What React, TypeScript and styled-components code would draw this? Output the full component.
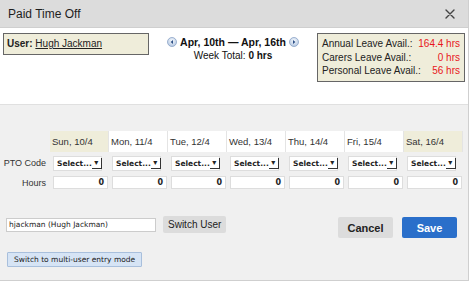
import { createGlobalStyle, styled } from 'styled-components';

const GlobalStyle = createGlobalStyle`
  html, body {
    margin: 0;
    padding: 0;
    background: #fff;
  }
  body {
    font-family: 'Liberation Sans', Arial, sans-serif;
    color: #222;
  }
`;

const days = [
  { label: 'Sun, 10/4', weekend: true },
  { label: 'Mon, 11/4', weekend: false },
  { label: 'Tue, 12/4', weekend: false },
  { label: 'Wed, 13/4', weekend: false },
  { label: 'Thu, 14/4', weekend: false },
  { label: 'Fri, 15/4', weekend: false },
  { label: 'Sat, 16/4', weekend: true },
];

const leave = [
  { name: 'Annual Leave Avail.:', value: '164.4 hrs' },
  { name: 'Carers Leave Avail.:', value: '0 hrs' },
  { name: 'Personal Leave Avail.:', value: '56 hrs' },
];

const Arrow = ({ dir }: { dir: 'left' | 'right' }) => (
  <svg width='10' height='10' viewBox='0 0 10 10'>
    <defs>
      <radialGradient id={`g-${dir}`} cx='50%' cy='35%' r='60%'>
        <stop offset='0' stopColor='#f4f8fd' />
        <stop offset='1' stopColor='#b9cbe3' />
      </radialGradient>
    </defs>
    <circle cx='5' cy='5' r='4.5' fill={`url(#g-${dir})`} stroke='#8aa3c6' strokeWidth='0.8' />
    {dir === 'left' ? (
      <path d='M6 3 L3.6 5 L6 7 Z' fill='#2c4f86' />
    ) : (
      <path d='M4 3 L6.4 5 L4 7 Z' fill='#2c4f86' />
    )}
  </svg>
);

const CloseIcon = () => (
  <svg width='10' height='10' viewBox='0 0 10 10'>
    <path d='M1 1 L9 9 M9 1 L1 9' stroke='#444' strokeWidth='1.4' strokeLinecap='round' />
  </svg>
);

const App = () => {
  return (
    <>
      <GlobalStyle />
      <Dialog>
        <Header>
          <Title>Paid Time Off</Title>
          <CloseIcon />
        </Header>
        <TopSection>
          <UserBox>
            <b>User:</b> <UserLink>Hugh Jackman</UserLink>
          </UserBox>
          <WeekNav>
            <WeekRange>
              <Arrow dir='left' />
              <span>Apr, 10th — Apr, 16th</span>
              <Arrow dir='right' />
            </WeekRange>
            <WeekTotal>
              Week Total: <b>0 hrs</b>
            </WeekTotal>
          </WeekNav>
          <LeaveBox>
            {leave.map((l) => (
              <LeaveRow key={l.name}>
                <span>{l.name}</span>
                <LeaveValue>{l.value}</LeaveValue>
              </LeaveRow>
            ))}
          </LeaveBox>
        </TopSection>
        <Body>
          <Grid>
            <span />
            {days.map((d) => (
              <DayHead key={d.label} $weekend={d.weekend}>
                {d.label}
              </DayHead>
            ))}
            <RowLabel>PTO Code</RowLabel>
            {days.map((d) => (
              <Cell key={d.label}>
                <Select>
                  <span>Select...</span>
                  <SelectArrow>▾</SelectArrow>
                </Select>
              </Cell>
            ))}
            <RowLabel>Hours</RowLabel>
            {days.map((d) => (
              <Cell key={d.label}>
                <HoursInput>0</HoursInput>
              </Cell>
            ))}
          </Grid>
          <ActionRow>
            <UserSwitch>
              <UserInput>hjackman (Hugh Jackman)</UserInput>
              <GrayButton>Switch User</GrayButton>
            </UserSwitch>
            <Buttons>
              <CancelButton>Cancel</CancelButton>
              <SaveButton>Save</SaveButton>
            </Buttons>
          </ActionRow>
          <ModeButton>Switch to multi-user entry mode</ModeButton>
        </Body>
      </Dialog>
    </>
  );
};

const Dialog = styled.div`
  width: 469px;
  height: 281px;
  box-sizing: border-box;
  border-right: 1px solid #cfcfcf;
  border-bottom: 1px solid #cfcfcf;
  display: flex;
  flex-direction: column;
  background: #f0f0f0;
`;

const Header = styled.div`
  height: 28px;
  flex: none;
  box-sizing: border-box;
  background: #dcdcdc;
  border-bottom: 1px solid #cfcfcf;
  display: flex;
  align-items: center;
  justify-content: space-between;
  padding: 0 13px 0 8px;
`;

const Title = styled.div`
  font-size: 12px;
  color: #1e1e1e;
`;

const TopSection = styled.div`
  height: 77px;
  flex: none;
  box-sizing: border-box;
  background: #fff;
  border-bottom: 1px solid #e0e0e0;
  display: flex;
  justify-content: space-between;
  align-items: flex-start;
  padding: 5px 3px 0 3px;
`;

const UserBox = styled.div`
  width: 146px;
  height: 22px;
  box-sizing: border-box;
  background: #efedda;
  border: 1px solid #666;
  font-size: 10px;
  padding: 4px 3px;
  color: #222;
  white-space: nowrap;
`;

const UserLink = styled.span`
  text-decoration: underline;
  color: #222;
`;

const WeekNav = styled.div`
  display: flex;
  flex-direction: column;
  align-items: center;
  padding-top: 3px;
  font-size: 10px;
  color: #111;
`;

const WeekRange = styled.div`
  display: flex;
  align-items: center;
  gap: 3px;
  font-weight: bold;
  font-size: 10.5px;
`;

const WeekTotal = styled.div`
  margin-top: 2px;
`;

const LeaveBox = styled.div`
  width: 148px;
  box-sizing: border-box;
  background: #efedda;
  border: 1px solid #666;
  padding: 3px 4px 3px 4px;
  font-size: 10px;
  color: #222;
  white-space: nowrap;
`;

const LeaveRow = styled.div`
  display: flex;
  justify-content: space-between;
  line-height: 13.5px;
`;

const LeaveValue = styled.span`
  color: #e8161b;
`;

const Body = styled.div`
  flex: 1;
  display: flex;
  flex-direction: column;
  padding: 26px 0 0 0;
`;

const Grid = styled.div`
  display: grid;
  grid-template-columns: 50px repeat(7, 59px);
  grid-template-rows: 21px 22px 17px;
`;

const DayHead = styled.div<{ $weekend: boolean }>`
  background: ${({ $weekend }) => ($weekend ? '#efedda' : '#fff')};
  border-right: 1px solid #e4e4e4;
  font-size: 9.5px;
  color: #333;
  display: flex;
  align-items: center;
  padding-left: 2px;
  white-space: nowrap;
`;

const RowLabel = styled.div`
  font-size: 9px;
  color: #333;
  display: flex;
  align-items: center;
  justify-content: flex-end;
  padding-right: 4px;
  white-space: nowrap;
`;

const Cell = styled.div`
  display: flex;
  align-items: center;
  padding-left: 3px;
`;

const Select = styled.div`
  width: 49px;
  height: 15px;
  box-sizing: border-box;
  background: #fff;
  border: 1px solid #ddd;
  display: flex;
  align-items: center;
  justify-content: space-between;
  padding-left: 3px;
  font-size: 7.5px;
  font-weight: bold;
  font-family: 'DejaVu Sans', Verdana, sans-serif;
  color: #222;
  white-space: nowrap;
`;

const SelectArrow = styled.span`
  width: 10px;
  height: 11px;
  flex: none;
  box-sizing: border-box;
  border-right: 1px solid #333;
  border-bottom: 1px solid #333;
  display: flex;
  align-items: center;
  justify-content: center;
  font-size: 8px;
  margin-right: 1px;
`;

const HoursInput = styled.div`
  width: 55px;
  height: 13px;
  box-sizing: border-box;
  background: #fff;
  border: 1px solid #ddd;
  font-size: 8px;
  font-weight: bold;
  font-family: 'DejaVu Sans', Verdana, sans-serif;
  text-align: right;
  padding-right: 3px;
  line-height: 11px;
  color: #222;
`;

const ActionRow = styled.div`
  display: flex;
  justify-content: space-between;
  align-items: flex-start;
  margin-top: 25px;
  padding: 0 11px 0 6px;
`;

const UserSwitch = styled.div`
  display: flex;
  align-items: center;
  gap: 7px;
`;

const UserInput = styled.div`
  width: 150px;
  height: 14px;
  box-sizing: border-box;
  background: #fff;
  border: 1px solid #ccc;
  font-size: 7.5px;
  font-family: 'DejaVu Sans', Verdana, sans-serif;
  line-height: 12px;
  padding-left: 2px;
  color: #222;
`;

const GrayButton = styled.div`
  height: 17px;
  padding: 0 5px;
  background: #dcdcdc;
  border-radius: 2px;
  font-size: 10px;
  display: flex;
  align-items: center;
  color: #222;
`;

const Buttons = styled.div`
  display: flex;
  gap: 9px;
  margin-top: 1px;
`;

const CancelButton = styled.div`
  width: 55px;
  height: 21px;
  background: #dcdcdc;
  border-radius: 2px;
  font-size: 11px;
  font-weight: bold;
  display: flex;
  align-items: center;
  justify-content: center;
  color: #222;
`;

const SaveButton = styled(CancelButton)`
  background: #2a6fca;
  color: #fff;
`;

const ModeButton = styled.div`
  align-self: flex-start;
  margin: 14px 0 0 7px;
  height: 15px;
  box-sizing: border-box;
  padding: 0 6px;
  background: #d6e4f5;
  border: 1px solid #a8bfdc;
  border-radius: 1px;
  font-size: 7.5px;
  font-family: 'DejaVu Sans', Verdana, sans-serif;
  display: flex;
  align-items: center;
  color: #222;
`;

export default App;
